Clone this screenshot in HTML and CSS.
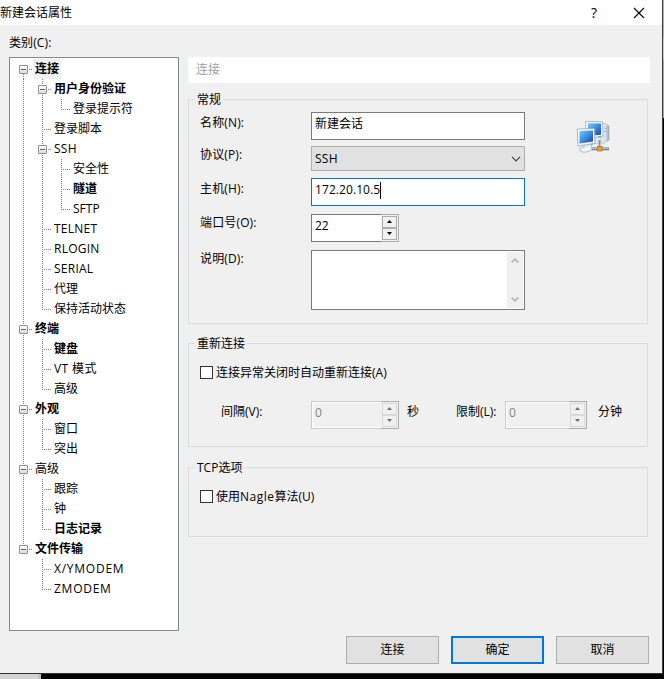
FILE: index.html
```html
<!DOCTYPE html>
<html lang="zh-CN">
<head>
<meta charset="utf-8">
<title>新建会话属性</title>
<link rel="stylesheet" href="styles.css">
</head>
<body>
<div class="desktop">
<main class="dialog">
  <header class="titlebar">
    <h1>新建会话属性</h1>
    <span class="help">?</span>
    <svg class="close" width="12" height="12" viewBox="0 0 12 12"><path d="M1 1L11 11M11 1L1 11" stroke="#000" stroke-width="1.1" fill="none"/></svg>
  </header>
  <div class="caption">类别(C):</div>
  <div class="content">
    <nav class="tree">
      <div class="row"><i class="cell box start"></i><span class="label bold selected">连接</span></div>
      <div class="row"><i class="cell line"></i><i class="cell box"></i><span class="label bold">用户身份验证</span></div>
      <div class="row"><i class="cell line"></i><i class="cell line"></i><i class="cell last"></i><span class="label">登录提示符</span></div>
      <div class="row"><i class="cell line"></i><i class="cell tee"></i><span class="label">登录脚本</span></div>
      <div class="row"><i class="cell line"></i><i class="cell box"></i><span class="label wide">SSH</span></div>
      <div class="row"><i class="cell line"></i><i class="cell line"></i><i class="cell tee"></i><span class="label">安全性</span></div>
      <div class="row"><i class="cell line"></i><i class="cell line"></i><i class="cell tee"></i><span class="label bold">隧道</span></div>
      <div class="row"><i class="cell line"></i><i class="cell line"></i><i class="cell last"></i><span class="label">SFTP</span></div>
      <div class="row"><i class="cell line"></i><i class="cell tee"></i><span class="label wide">TELNET</span></div>
      <div class="row"><i class="cell line"></i><i class="cell tee"></i><span class="label wide">RLOGIN</span></div>
      <div class="row"><i class="cell line"></i><i class="cell tee"></i><span class="label wide">SERIAL</span></div>
      <div class="row"><i class="cell line"></i><i class="cell tee"></i><span class="label">代理</span></div>
      <div class="row"><i class="cell line"></i><i class="cell last"></i><span class="label">保持活动状态</span></div>
      <div class="row"><i class="cell box"></i><span class="label bold">终端</span></div>
      <div class="row"><i class="cell line"></i><i class="cell tee"></i><span class="label bold">键盘</span></div>
      <div class="row"><i class="cell line"></i><i class="cell tee"></i><span class="label vt">VT 模式</span></div>
      <div class="row"><i class="cell line"></i><i class="cell last"></i><span class="label">高级</span></div>
      <div class="row"><i class="cell box"></i><span class="label bold">外观</span></div>
      <div class="row"><i class="cell line"></i><i class="cell tee"></i><span class="label">窗口</span></div>
      <div class="row"><i class="cell line"></i><i class="cell last"></i><span class="label">突出</span></div>
      <div class="row"><i class="cell box"></i><span class="label">高级</span></div>
      <div class="row"><i class="cell line"></i><i class="cell tee"></i><span class="label">跟踪</span></div>
      <div class="row"><i class="cell line"></i><i class="cell tee"></i><span class="label">钟</span></div>
      <div class="row"><i class="cell line"></i><i class="cell last"></i><span class="label bold">日志记录</span></div>
      <div class="row"><i class="cell box end"></i><span class="label bold">文件传输</span></div>
      <div class="row"><i class="cell"></i><i class="cell tee"></i><span class="label modem">X/YMODEM</span></div>
      <div class="row"><i class="cell"></i><i class="cell last"></i><span class="label modem">ZMODEM</span></div>
    </nav>
    <div class="page">
      <h2 class="page-title">连接</h2>
      <section class="group general">
        <h3 class="legend">常规</h3>
        <div class="general-body">
          <div class="form">
            <div class="field"><span class="name low">名称(N):</span><div class="input">新建会话</div></div>
            <div class="field"><span class="name">协议(P):</span><div class="select"><span>SSH</span><svg width="10" height="6" viewBox="0 0 10 6"><path d="M1 .8L5 4.8L9 .8" stroke="#404040" stroke-width="1.2" fill="none"/></svg></div></div>
            <div class="field"><span class="name low">主机(H):</span><div class="input focus"><span class="host">172.20.10.5</span><i class="caret"></i></div></div>
            <div class="field"><span class="name">端口号(O):</span>
              <div class="spinner"><span class="value">22</span><span class="arrows"><i class="btn up"></i><i class="btn down"></i></span></div></div>
            <div class="field"><span class="name">说明(D):</span>
              <div class="textarea"><div class="scroll">
                <svg width="8" height="7" viewBox="0 0 8 7"><path d="M.7 5.5L4 2.2L7.3 5.5" stroke="#bdbdbd" stroke-width="2" fill="none"/></svg>
                <svg width="8" height="7" viewBox="0 0 8 7"><path d="M.7 1.5L4 4.8L7.3 1.5" stroke="#bdbdbd" stroke-width="2" fill="none"/></svg>
              </div></div></div>
          </div>
          <svg class="net-icon" width="34" height="34" viewBox="0 0 34 34">
            <defs>
              <linearGradient id="screen" x1="0" y1="0" x2="1" y2="1"><stop offset="0" stop-color="#7cc9f5"/><stop offset=".5" stop-color="#3b8de0"/><stop offset="1" stop-color="#1743ad"/></linearGradient>
              <linearGradient id="tower" x1="0" y1="0" x2="1" y2="0"><stop offset="0" stop-color="#f2f6f9"/><stop offset=".65" stop-color="#d5dee5"/><stop offset="1" stop-color="#8fa6b8"/></linearGradient>
            </defs>
            <path d="M25 4L29 3.5L33 6V20L27 24L24 22Z" fill="url(#tower)" stroke="#a7b8c4" stroke-width=".7"/>
            <path d="M28 8L31.5 9M28 11L31.5 12" stroke="#9aabb7" stroke-width=".7"/>
            <path d="M9.5 1.3L26.5 1.8L27 17L10 18Z" fill="#f2f7fa" stroke="#9aafbd" stroke-width=".8"/>
            <path d="M12 3.2L25 3.5V14.8L12 15.8Z" fill="url(#screen)"/>
            <path d="M18 18L24 17.5L26 22L20 24Z" fill="#e3eaf0" stroke="#b5c3cd" stroke-width=".6"/>
            <path d="M14 28.8H33" stroke="#718596" stroke-width="3"/>
            <path d="M14 28.3H32.5" stroke="#c6d2db" stroke-width="1"/>
            <path d="M23.5 20V27" stroke="#8498a7" stroke-width="2"/>
            <path d="M8 24L15 23L16 29Q13 33 6 32Q2 31 4 28L8 27Z" fill="#e5edf3" stroke="#a5b7c4" stroke-width=".8"/>
            <path d="M6 29Q10 31 14 28" stroke="#fff" stroke-width="1.5" fill="none"/>
            <path d="M1.2 9L18.5 8.5L19 23.5L2 26Z" fill="#f5f9fb" stroke="#8fa6b6" stroke-width=".8"/>
            <path d="M3.5 11L17 10.5V21.5L3.5 23.5Z" fill="url(#screen)"/>
            <path d="M22 16.5H25M14.5 24H17.5" stroke="#5fc07a" stroke-width="1"/>
            <rect x="21.5" y="26.5" width="4.5" height="4.5" fill="#ff9d12" stroke="#cb7410" stroke-width=".8"/>
          </svg>
        </div>
      </section>
      <section class="group reconnect">
        <h3 class="legend">重新连接</h3>
        <div class="check"><i></i><span>连接异常关闭时自动重新连接(A)</span></div>
        <div class="limits">
          <span class="interval">间隔(V):</span>
          <div class="spinner disabled"><span class="value">0</span><span class="arrows"><i class="btn up"></i><i class="btn down"></i></span></div>
          <span class="seconds">秒</span>
          <span class="limit">限制(L):</span>
          <div class="spinner disabled short"><span class="value">0</span><span class="arrows"><i class="btn up"></i><i class="btn down"></i></span></div>
          <span class="minutes">分钟</span>
        </div>
      </section>
      <section class="group tcp">
        <h3 class="legend">TCP选项</h3>
        <div class="check"><i></i><span>使用<span class="nagle">Nagle</span>算法(U)</span></div>
      </section>
    </div>
  </div>
  <footer class="actions">
    <div class="button">连接</div>
    <div class="button primary">确定</div>
    <div class="button">取消</div>
  </footer>
</main>
<div class="behind-right"></div>
<div class="behind-bottom"></div>
</div>
</body>
</html>
```
FILE: styles.css
```css
*, *::before { box-sizing: border-box; }
body {
  margin: 0;
  font: 12px/16px "Open Sans", "Noto Sans CJK SC", sans-serif;
  color: #000;
  background: #000;
}
h1, h2, h3 { margin: 0; font: inherit; }
i { font-style: normal; }
svg { display: block; flex: none; }

.desktop {
  display: grid;
  grid-template-columns: 663px 1px;
  grid-template-rows: 674px 5px;
  width: 664px;
  height: 679px;
  overflow: hidden;
}
.dialog {
  display: flex;
  flex-direction: column;
  background: #f0f0f0;
  border-right: 1px solid #3c3e3f;
  border-bottom: 1px solid #303332;
}
.behind-right { background: linear-gradient(#b0b0b0 0 38px, #c8c8c8 38px 60px, #a8a8a8 60px 118px, #000 118px); }
.behind-bottom { grid-column: 1 / 3; background: linear-gradient(90deg, #d3d3d3 0 38px, #c2c2c2 38px 41px, #000 41px); }

.titlebar {
  display: flex;
  align-items: center;
  height: 25px;
  background: #fff;
}
.titlebar h1 { flex: 1; line-height: 24px; }
.help { width: 8px; margin-right: 35px; font-size: 14px; font-weight: 500; line-height: 24px; text-align: center; }
.close { margin-right: 17px; }

.caption { height: 32px; padding: 10px 0 0 9px; letter-spacing: .1px; }
.content { display: flex; gap: 9px; padding-left: 9px; height: 574px; }

.tree {
  width: 170px;
  padding: 1px 0 0 4px;
  border: 1px solid #828790;
  background: #fff;
}
.row { display: flex; height: 20px; }
.label { height: 20px; padding: 0 2px; line-height: 19px; white-space: nowrap; }
.bold { font-weight: 700; }
.wide { letter-spacing: .25px; }
.vt { letter-spacing: .4px; }
.modem { letter-spacing: .75px; }
.selected { background: #f0f0f0; }
.cell {
  --v: repeating-linear-gradient(#808080 0 1px, transparent 1px 2px);
  --h: repeating-linear-gradient(90deg, #808080 0 1px, transparent 1px 2px);
  width: 19px;
  height: 20px;
  flex: none;
  background-repeat: no-repeat;
}
.line { background-image: var(--v); background-size: 1px 20px; background-position: 9px 0; }
.tee, .last { background-image: var(--v), var(--h); background-size: 1px 20px, 9px 1px; background-position: 9px 0, 9px 10px; }
.last { background-size: 1px 10px, 9px 1px; }
.box { padding: 6px 0 0 5px; background-image: var(--v), var(--h); background-size: 1px 20px, 3px 1px; background-position: 9px 0, 15px 10px; }
.box.start { background-size: 1px 5px, 3px 1px; background-position: 9px 15px, 15px 10px; }
.box.end { background-size: 1px 6px, 3px 1px; }
.box::before {
  content: "";
  display: block;
  width: 9px;
  height: 9px;
  border: 1px solid #919191;
  border-radius: 1px;
  background: linear-gradient(#4b63a7, #4b63a7) center / 5px 1px no-repeat, linear-gradient(#fff, #ddd);
}

.page { width: 462px; }
.page-title { height: 26px; padding: 5px 8px; background: #fff; color: #a0a0a0; }
.group { width: 460px; border: 1px solid #dcdcdc; }
.legend { width: fit-content; height: 16px; margin: -8px 0 0 6px; padding: 0 2px; background: #f0f0f0; }
.general { height: 225px; margin-top: 16px; }
.reconnect { height: 104px; margin-top: 19px; }
.tcp { height: 70px; margin-top: 20px; }

.general-body { display: flex; padding: 4px 0 0 11px; }
.form { display: flex; flex-direction: column; width: 325px; }
.field { display: flex; margin-bottom: 8px; }
.field:nth-child(1) { margin-bottom: 6px; }
.field:nth-child(2) { margin-bottom: 7px; }
.name { width: 111px; padding-top: 1px; letter-spacing: .15px; }
.name.low { padding-top: 3px; }
.input, .select, .textarea { width: 214px; border: 1px solid #7a7a7a; background: #fff; }
.input { display: flex; height: 28px; padding: 3px; }
.input.focus { border-color: #0078d7; }
.host { letter-spacing: .08px; }
.caret { width: 1px; height: 17px; background: #000; }
.select { display: flex; justify-content: space-between; align-items: center; height: 25px; padding: 0 3px; border-color: #adadad; background: #e1e1e1; letter-spacing: .25px; }
.textarea { height: 60px; padding: 1px; }
.scroll { display: flex; flex-direction: column; justify-content: space-between; align-items: center; width: 16px; height: 56px; margin-left: auto; padding: 5px 0; background: #f0f0f0; }
.net-icon { margin: 8px 0 0 51px; }

.spinner { display: flex; width: 88px; height: 28px; border: 1px solid #7a7a7a; border-right: 0; background: #fff; }
.value { flex: 1; padding: 3px; }
.arrows { width: 18px; margin: -1px 0; padding: 1px; border: 1px solid #adadad; border-left: 0; background: #f0f0f0; }
.btn { display: flex; align-items: center; justify-content: center; width: 15px; height: 12px; border: 1px solid #adadad; background: #f0f0f0; }
.btn::before { content: ""; width: 5px; height: 3px; margin-bottom: 1px; background: #000; clip-path: polygon(50% 0, 100% 100%, 0 100%); }
.btn.down::before { clip-path: polygon(0 0, 100% 0, 50% 100%); }
.disabled { border-color: #ccc; background: #f0f0f0; box-shadow: inset 0 0 0 1px #fff; color: #838383; }
.disabled .btn { border-color: #d9d9d9; }
.disabled .btn::before { background: #6d6d6d; }
.short { width: 82px; }

.check { display: flex; align-items: center; gap: 3px; height: 16px; margin: 13px 0 0 11px; }
.check i { width: 13px; height: 13px; margin-top: -1px; border: 1px solid #333; background: #fff; }
.nagle { letter-spacing: .5px; }
.limits { display: flex; height: 28px; margin: 20px 0 0 32px; line-height: 21px; }
.limits .value { line-height: 16px; }
.interval { width: 90px; }
.seconds { width: 57px; padding-left: 8px; }
.limit { width: 49px; }
.minutes { padding-left: 11px; }

.actions { display: flex; justify-content: flex-end; gap: 12px; margin-top: 5px; padding-right: 13px; }
.button { width: 93px; height: 28px; border: 1px solid #adadad; background: #e1e1e1; line-height: 25px; text-align: center; }
.button.primary { border: 2px solid #0078d7; line-height: 23px; }
```
